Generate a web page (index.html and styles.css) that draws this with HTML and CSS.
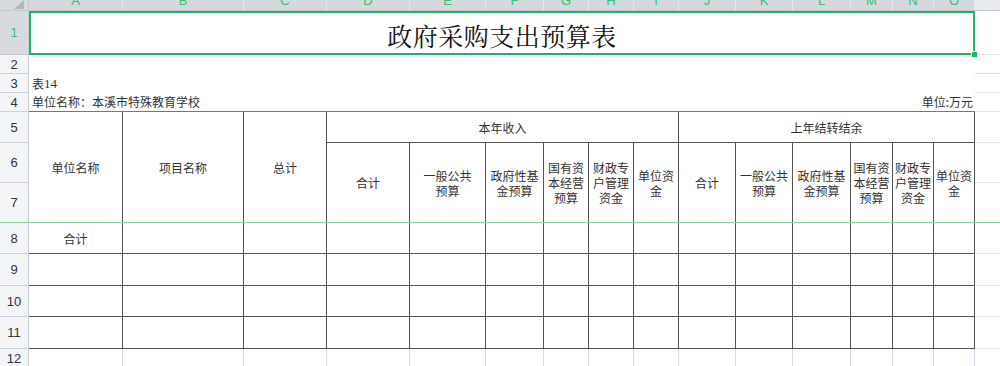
FILE: index.html
```html
<!DOCTYPE html>
<html lang="zh-CN">
<head>
<meta charset="utf-8">
<title>政府采购支出预算表</title>
<link rel="stylesheet" href="styles.css">
</head>
<body>
<div class="sheet">
  <div class="freeze"></div>

  <div class="corner"><span class="tri"></span></div>
  <div class="ch"><span>A</span></div>
  <div class="ch"><span>B</span></div>
  <div class="ch"><span>C</span></div>
  <div class="ch"><span>D</span></div>
  <div class="ch"><span>E</span></div>
  <div class="ch"><span>F</span></div>
  <div class="ch"><span>G</span></div>
  <div class="ch"><span>H</span></div>
  <div class="ch"><span>I</span></div>
  <div class="ch"><span>J</span></div>
  <div class="ch"><span>K</span></div>
  <div class="ch"><span>L</span></div>
  <div class="ch"><span>M</span></div>
  <div class="ch"><span>N</span></div>
  <div class="ch"><span>O</span></div>
  <div class="ch off"></div>

  <div class="rh sel">1</div>
  <div class="title span15">政府采购支出预算表<span class="handle"></span></div>
  <div class="pad"></div>

  <div class="rh">2</div>
  <div class="blank span15"></div>
  <div class="pad"></div>

  <div class="rh">3</div>
  <div class="note span15">表<span class="num">14</span></div>
  <div class="pad"></div>

  <div class="rh">4</div>
  <div class="note unit span15"><span>单位名称：本溪市特殊教育学校</span><span>单位:万元</span></div>
  <div class="pad"></div>

  <div class="rh">5</div>
  <div class="t rs3">单位名称</div>
  <div class="t rs3">项目名称</div>
  <div class="t rs3">总计</div>
  <div class="t span6">本年收入</div>
  <div class="t span6">上年结转结余</div>
  <div class="pad"></div>

  <div class="rh">6</div>
  <div class="t rs2">合计</div>
  <div class="t rs2">一般公共<br>预算</div>
  <div class="t rs2">政府性基<br>金预算</div>
  <div class="t rs2">国有资<br>本经营<br>预算</div>
  <div class="t rs2">财政专<br>户管理<br>资金</div>
  <div class="t rs2">单位资<br>金</div>
  <div class="t rs2">合计</div>
  <div class="t rs2">一般公共<br>预算</div>
  <div class="t rs2">政府性基<br>金预算</div>
  <div class="t rs2">国有资<br>本经营<br>预算</div>
  <div class="t rs2">财政专<br>户管理<br>资金</div>
  <div class="t rs2">单位资<br>金</div>
  <div class="pad"></div>

  <div class="rh">7</div>
  <div class="pad"></div>

  <div class="rh">8</div>
  <div class="t">合计</div>
  <div class="t"></div><div class="t"></div><div class="t"></div><div class="t"></div>
  <div class="t"></div><div class="t"></div><div class="t"></div><div class="t"></div>
  <div class="t"></div><div class="t"></div><div class="t"></div><div class="t"></div>
  <div class="t"></div><div class="t"></div>
  <div class="pad"></div>

  <div class="rh">9</div>
  <div class="t"></div><div class="t"></div><div class="t"></div><div class="t"></div><div class="t"></div>
  <div class="t"></div><div class="t"></div><div class="t"></div><div class="t"></div><div class="t"></div>
  <div class="t"></div><div class="t"></div><div class="t"></div><div class="t"></div><div class="t"></div>
  <div class="pad"></div>

  <div class="rh">10</div>
  <div class="t"></div><div class="t"></div><div class="t"></div><div class="t"></div><div class="t"></div>
  <div class="t"></div><div class="t"></div><div class="t"></div><div class="t"></div><div class="t"></div>
  <div class="t"></div><div class="t"></div><div class="t"></div><div class="t"></div><div class="t"></div>
  <div class="pad"></div>

  <div class="rh">11</div>
  <div class="t"></div><div class="t"></div><div class="t"></div><div class="t"></div><div class="t"></div>
  <div class="t"></div><div class="t"></div><div class="t"></div><div class="t"></div><div class="t"></div>
  <div class="t"></div><div class="t"></div><div class="t"></div><div class="t"></div><div class="t"></div>
  <div class="pad"></div>

  <div class="rh">12</div>
  <div class="gl"></div><div class="gl"></div><div class="gl"></div><div class="gl"></div><div class="gl"></div>
  <div class="gl"></div><div class="gl"></div><div class="gl"></div><div class="gl"></div><div class="gl"></div>
  <div class="gl"></div><div class="gl"></div><div class="gl"></div><div class="gl"></div><div class="gl"></div>
  <div class="pad"></div>
</div>
</body>
</html>
```
FILE: styles.css
```css
* { box-sizing: border-box; }
html, body { margin: 0; padding: 0; background: #fff; }
body {
  width: 1000px;
  height: 366px;
  overflow: hidden;
  font-family: "Noto Sans CJK SC", "Liberation Sans", sans-serif;
  font-size: 12px;
  color: #333;
}
.sheet {
  position: relative;
  display: grid;
  grid-template-columns: 29px 94px 121px 83px 83px 76px 58px 45px 45px 45px 57px 57px 58px 42px 41px 41px 1fr;
  grid-template-rows: 11px 44px 19px 19px 19px 31px 40px 40px 31px 32px 31px 32px 20px;
  width: 1000px;
}
.freeze {
  position: absolute;
  left: 0;
  right: 0;
  top: 222px;
  height: 1px;
  background: #8ed2a6;
  z-index: 3;
}
.corner {
  background: #d7dadf;
  border-right: 1px solid #c3c8cf;
  border-bottom: 1px solid #c3c8cf;
  position: relative;
}
.tri {
  position: absolute;
  right: 4px;
  bottom: 1px;
  width: 10px;
  height: 9px;
  background: #b3b8bf;
  clip-path: polygon(100% 0, 100% 100%, 0 100%);
}
.ch {
  background: #d5d9de;
  border-right: 1px solid #e4e7eb;
  border-bottom: 1px solid #c3c8cf;
  display: flex;
  align-items: flex-end;
  justify-content: center;
  overflow: hidden;
  font-family: "Liberation Sans", sans-serif;
  font-size: 13px;
  color: #3dbb76;
}
.ch span { line-height: 13px; margin-bottom: 3px; }
.ch.off { background: #e9ebee; border-right: none; }
.rh {
  background: #f4f5f7;
  border-right: 1px solid #c8ced8;
  border-bottom: 1px solid #cdd3dc;
  display: flex;
  align-items: center;
  justify-content: center;
  font-family: "Liberation Sans", sans-serif;
  font-size: 13px;
  color: #2c3646;
}
.rh.sel { background: #d7dade; color: #3dbb76; border-bottom-color: #c3c8cf; }
.span15 { grid-column: span 15; }
.span6 { grid-column: span 6; }
.rs3 { grid-row: span 3; }
.rs2 { grid-row: span 2; }
.title {
  position: relative;
  border: 2px solid #1fb36a;
  display: flex;
  align-items: center;
  justify-content: center;
  padding-top: 3px;
  font-family: "Noto Serif CJK SC", "Noto Sans CJK SC", serif;
  font-size: 25px;
  color: #111;
  letter-spacing: 0.5px;
}
.handle {
  position: absolute;
  right: -5px;
  bottom: -5px;
  width: 7px;
  height: 7px;
  background: #1fb36a;
  border: 1px solid #fff;
}
.pad { border-bottom: 1px solid #dfe3ea; }
.note {
  display: flex;
  align-items: flex-end;
  padding: 0 2px 1px 3px;
  line-height: 16px;
  color: #333;
}
.num { font-family: "Liberation Serif", serif; font-size: 13px; }
.unit { justify-content: space-between; border-bottom: 1px solid #777; }
.t {
  border-right: 1px solid #555;
  border-bottom: 1px solid #555;
  display: flex;
  align-items: center;
  justify-content: center;
  text-align: center;
  line-height: 15px;
  color: #333;
}
.gl { border-right: 1px solid #d4dbe8; }
```
